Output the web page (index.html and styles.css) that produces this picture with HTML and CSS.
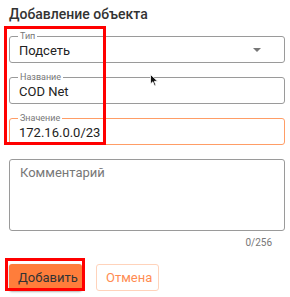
FILE: index.html
```html
<!DOCTYPE html>
<html lang="ru">
<head>
<meta charset="utf-8">
<link rel="stylesheet" href="styles.css">
</head>
<body>
<div class="page">
  <h1 class="title">Добавление объекта</h1>
  <div class="form">
    <div class="field">
      <span class="label">Тип</span>
      <span class="value">Подсеть</span>
      <span class="caret"></span>
    </div>
    <div class="field">
      <span class="label">Название</span>
      <span class="value">COD Net</span>
    </div>
    <div class="field active">
      <span class="label">Значение</span>
      <span class="value">172.16.0.0/23</span>
    </div>
    <div class="area">
      <span class="placeholder">Комментарий</span>
    </div>
    <div class="counter">0/256</div>
  </div>
  <div class="actions">
    <button class="btn primary">Добавить</button>
    <button class="btn outline">Отмена</button>
  </div>
  <div class="mark mark-fields"></div>
  <div class="mark mark-btn"></div>
  <svg class="cursor" width="9" height="13" viewBox="0 0 9 13"><path d="M0.5 0.5 L0.5 10 L2.8 7.8 L4.6 12 L6 11.4 L4.3 7.3 L7.6 7.3 Z" fill="#111" stroke="#fff" stroke-width="0.8"/></svg>
</div>
</body>
</html>
```

FILE: styles.css
```css
* { box-sizing: border-box; }
html, body { margin: 0; padding: 0; background: #fff; }
body { font-family: Roboto, "Noto Sans", sans-serif; color: #333; }
.page { position: relative; width: 290px; height: 297px; padding: 6px 5px 0 9px; }
.title { margin: 0; font-size: 14px; font-weight: 500; line-height: 17px; color: #333; letter-spacing: 0; }
.form { display: flex; flex-direction: column; gap: 14px; margin-top: 13px; }
.field { position: relative; height: 27px; border: 1px solid #9a9a9a; border-radius: 3px; display: flex; align-items: center; padding: 0 9px; }
.field.active { border-color: #ff9d66; }
.label { position: absolute; left: 8px; top: -6px; font-size: 9px; line-height: 10px; color: #777; background: #fff; padding: 0 2px; }
.value { font-size: 13px; color: #222; line-height: 15px; margin-top: 1px; }
.caret { margin-left: auto; margin-right: 14px; width: 0; height: 0; border-left: 4px solid transparent; border-right: 4px solid transparent; border-top: 4px solid #777; }
.area { height: 72px; border: 1px solid #9a9a9a; border-radius: 3px; padding: 5px 10px; font-size: 13px; line-height: 15px; }
.placeholder { font-size: 13px; color: #777; line-height: 15px; }
.counter { margin-top: -8px; align-self: flex-end; margin-right: 13px; font-size: 10px; color: #777; line-height: 12px; }
.actions { display: flex; gap: 14px; margin-top: 15px; }
.btn { height: 27px; border-radius: 3px; font-family: Roboto, "Noto Sans", sans-serif; font-size: 13px; padding: 0 9px; cursor: pointer; }
.primary { width: 73px; background: #ff7d3b; border: none; color: #333; box-shadow: 0 1px 2px rgba(0,0,0,0.3); }
.outline { width: 63px; background: #fff; border: 1px solid #ffd3bb; color: #ff8c52; }
.mark { position: absolute; border: 3px solid #f00; }
.mark-fields { left: 4px; top: 26px; width: 102px; height: 119px; }
.mark-btn { left: 5px; top: 258px; width: 80px; height: 33px; }
.cursor { position: absolute; left: 150px; top: 74px; }
```
